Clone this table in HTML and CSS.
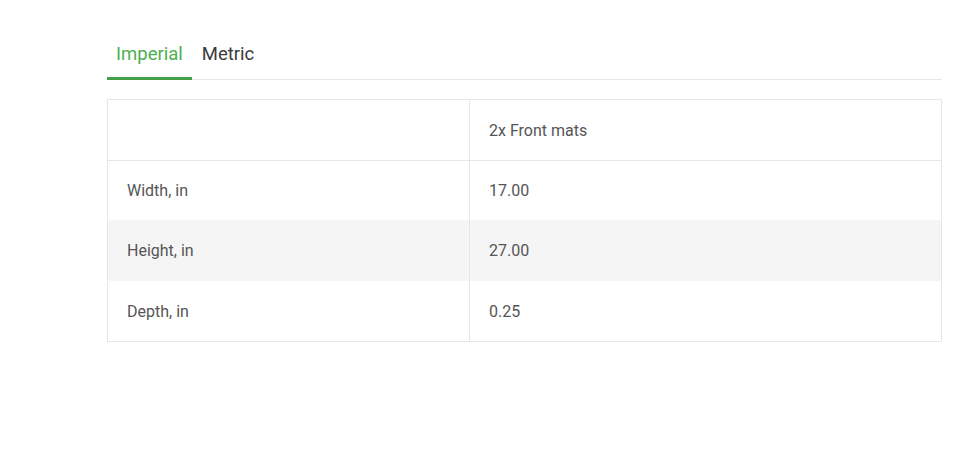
FILE: index.html
```html
<!DOCTYPE html>
<html lang="en">
<head>
  <meta charset="UTF-8">
  <meta name="viewport" content="width=device-width, initial-scale=1.0">
  <title>Dimensions</title>
  <link rel="stylesheet" href="styles.css">
</head>
<body>
  <div class="container">
    <!-- Unit tabs -->
    <div class="tabs">
      <button class="tab active">Imperial</button>
      <button class="tab">Metric</button>
    </div>

    <!-- Dimensions table -->
    <table class="dims">
      <tr class="head">
        <td></td>
        <td>2x Front mats</td>
      </tr>
      <tr>
        <td>Width, in</td>
        <td>17.00</td>
      </tr>
      <tr class="shade">
        <td>Height, in</td>
        <td>27.00</td>
      </tr>
      <tr class="last">
        <td>Depth, in</td>
        <td>0.25</td>
      </tr>
    </table>
  </div>
</body>
</html>
```

FILE: styles.css
```css
*,
*::before,
*::after {
  box-sizing: border-box;
  margin: 0;
  padding: 0;
}

body {
  font-family: Roboto, "Liberation Sans", Arial, sans-serif;
  background-color: #fff;
  color: #555;
}

.container {
  width: 835px;
  margin-left: 107px;
  padding-top: 36px;
}

/* Tabs */
.tabs {
  display: flex;
  border-bottom: 1px solid #e6e6e6;
  margin-bottom: 19px;
}

.tab {
  font-family: inherit;
  font-size: 18.5px;
  line-height: 24px;
  color: #3a3a3a;
  background: none;
  border: none;
  padding: 6px 9px 11px;
  margin-right: 1px;
  border-bottom: 3px solid transparent;
  margin-bottom: -1px;
  cursor: pointer;
}

.tab.active {
  color: #4caf50;
  border-bottom-color: #43a047;
}

/* Table */
.dims {
  width: 100%;
  border-collapse: collapse;
  border: 1px solid #e6e6e6;
  font-size: 16px;
}

.dims td {
  height: 60px;
  padding: 0 19px;
  border-top: 1px solid #e6e6e6;
  vertical-align: middle;
}

.dims .head td,
.dims .last td {
  height: 61px;
}

.dims td:first-child {
  width: 362px;
  border-right: 1px solid #e6e6e6;
}

.dims .shade td {
  background-color: #f5f5f5;
  border-top-color: #f5f5f5;
}

.dims .shade + tr td {
  border-top-color: #f5f5f5;
}
```
